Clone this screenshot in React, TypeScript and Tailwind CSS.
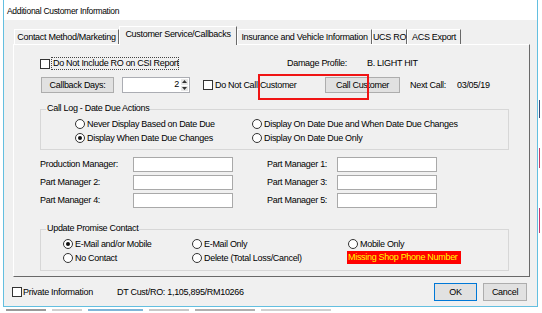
import React from "react";

/**
 * Small Win32-style controls
 */
function CheckBox() {
  return <span className="block w-[10px] h-[10px] shrink-0 border border-[#333] bg-white" />;
}

function Radio({ checked = false }: { checked?: boolean }) {
  return (
    <span className="flex w-[10px] h-[10px] shrink-0 items-center justify-center rounded-full border border-[#333] bg-white">
      {checked && <span className="block w-[4px] h-[4px] rounded-full bg-[#111]" />}
    </span>
  );
}

function RadioItem({ label, checked, className = "" }: { label: string; checked?: boolean; className?: string }) {
  return (
    <div className={`flex items-center gap-[2px] ${className}`}>
      <Radio checked={checked} />
      <span>{label}</span>
    </div>
  );
}

function WinButton({ label, className = "" }: { label: string; className?: string }) {
  return (
    <div className={`flex items-center justify-center border bg-[#e1e1e1] ${className}`}>{label}</div>
  );
}

function TextBox() {
  return <div className="w-[100px] h-[15px] border border-[#a9a9a9] bg-white" />;
}

function Group({ title, children }: { title: string; children: React.ReactNode }) {
  return (
    <div className="relative w-[469px] border border-[#d7d7d7]">
      {/* Legend sits over the top border */}
      <span className="absolute left-[5px] top-[-8px] bg-[#f0f0f0] px-[1px] leading-[13px]">{title}</span>
      {children}
    </div>
  );
}

const tabs = [
  { label: "Contact Method/Marketing", width: "w-[105px]" },
  { label: "Customer Service/Callbacks", width: "w-[118px]", active: true },
  { label: "Insurance and Vehicle Information", width: "w-[135px]" },
  { label: "UCS RO", width: "w-[35px]" },
  { label: "ACS Export", width: "w-[54px]" },
];

export default function App() {
  return (
    <div className="w-[542px] h-[313px] overflow-hidden whitespace-nowrap bg-white text-black text-[9px] leading-[13px] tracking-[-0.3px] font-['Liberation_Sans',Arial,sans-serif]">
      <div className="flex">
        <div className="w-[3px]" />
        {/* Window */}
        <div className="flex w-[535px] h-[307px] flex-col border-x border-b border-[#63bfe0]">
          {/* Title bar */}
          <div className="h-[20px] shrink-0 bg-white pl-[3px] pt-[5px] text-[8.5px]">
            Additional Customer Information
          </div>

          {/* Body */}
          <div className="flex flex-1 flex-col bg-[#f0f0f0]">
            {/* Tabs */}
            <div className="ml-[10px] flex h-[24px] shrink-0 items-end">
              {tabs.map((t) =>
                t.active ? (
                  <div
                    key={t.label}
                    className={`relative z-10 -mb-px flex h-[19px] items-center justify-center border-l border-t border-r border-l-white border-t-white border-r-[#696969] bg-[#f0f0f0] pb-[3px] ${t.width}`}
                  >
                    {t.label}
                  </div>
                ) : (
                  <div
                    key={t.label}
                    className={`flex h-[15px] items-center justify-center border-l border-t border-r border-l-white border-t-white border-r-[#696969] ${t.width}`}
                  >
                    {t.label}
                  </div>
                ),
              )}
            </div>

            {/* Tab panel */}
            <div className="relative ml-[9px] flex w-[517px] h-[233px] shrink-0 flex-col border border-l-white border-t-white border-r-[#696969] border-b-[#696969] pl-[26px]">
              {/* Row 1 */}
              <div className="mt-[12px] flex h-[13px] items-center">
                <CheckBox />
                <div className="ml-[1px] flex h-[13px] w-[128px] items-center border border-dotted border-[#444] pl-[1px]">
                  Do Not Include RO on CSI Report
                </div>
                <span className="ml-[108px] w-[80px]">Damage Profile:</span>
                <span>B. LIGHT HIT</span>
              </div>

              {/* Row 2 */}
              <div className="mt-[7px] flex h-[16px] items-center">
                <WinButton label="Callback Days:" className="ml-[1px] w-[73px] h-[16px] border-[#adadad]" />
                <div className="ml-[8px] flex w-[68px] h-[16px] border border-[#abadb3] bg-white">
                  <span className="flex-1 pr-[2px] text-right">2</span>
                  <div className="flex w-[8px] flex-col gap-px py-px pr-px">
                    <div className="flex flex-1 items-center justify-center bg-[#e6e6e6]">
                      <svg width="5" height="3" viewBox="0 0 5 3">
                        <path d="M0 3 L2.5 0 L5 3 Z" fill="#333" />
                      </svg>
                    </div>
                    <div className="flex flex-1 items-center justify-center bg-[#e6e6e6]">
                      <svg width="5" height="3" viewBox="0 0 5 3">
                        <path d="M0 0 L2.5 3 L5 0 Z" fill="#333" />
                      </svg>
                    </div>
                  </div>
                </div>
                <div className="ml-[13px]">
                  <CheckBox />
                </div>
                <span className="ml-[2px] w-[110px]">Do Not Call Customer</span>
                <WinButton label="Call Customer" className="w-[75px] h-[16px] border-[#adadad]" />
                <span className="ml-[10px] w-[47px]">Next Call:</span>
                <span>03/05/19</span>
              </div>

              {/* Highlight annotation */}
              <div className="pointer-events-none absolute left-[244px] top-[29px] w-[111px] h-[26px] border-2 border-[#f01414]" />

              {/* Call Log group */}
              <div className="mt-[16px]">
                <Group title="Call Log - Date Due Actions">
                  <div className="flex h-[39px] flex-col pl-[34px] pt-[7px]">
                    <div className="flex h-[14px]">
                      <RadioItem label="Never Display Based on Date Due" className="w-[177px]" />
                      <RadioItem label="Display On Date Due and When Date Due Changes" />
                    </div>
                    <div className="flex h-[14px]">
                      <RadioItem label="Display When Date Due Changes" checked className="w-[177px]" />
                      <RadioItem label="Display On Date Due Only" />
                    </div>
                  </div>
                </Group>
              </div>

              {/* Managers */}
              <div className="mt-[7px] flex flex-col gap-[3px]">
                {[
                  ["Production Manager:", "Part Manager 1:"],
                  ["Part Manager 2:", "Part Manager 3:"],
                  ["Part Manager 4:", "Part Manager 5:"],
                ].map(([a, b]) => (
                  <div key={a} className="flex h-[15px] items-center">
                    <span className="w-[93px]">{a}</span>
                    <TextBox />
                    <span className="ml-[34px] w-[70px]">{b}</span>
                    <TextBox />
                  </div>
                ))}
              </div>

              {/* Promise contact group */}
              <div className="mt-[21px]">
                <Group title="Update Promise Contact">
                  <div className="flex h-[40px] flex-col pl-[22px] pt-[7px]">
                    <div className="flex h-[14px]">
                      <RadioItem label="E-Mail and/or Mobile" checked className="w-[129px]" />
                      <RadioItem label="E-Mail Only" className="w-[156px]" />
                      <RadioItem label="Mobile Only" />
                    </div>
                    <div className="flex h-[14px]">
                      <RadioItem label="No Contact" className="w-[129px]" />
                      <RadioItem label="Delete (Total Loss/Cancel)" className="w-[155px]" />
                      <div className="flex h-[13px] w-[114px] items-center bg-[#ff0000] pl-px text-[#ffff00]">
                        Missing Shop Phone Number
                      </div>
                    </div>
                  </div>
                </Group>
              </div>
            </div>

            {/* Footer */}
            <div className="mt-[6px] flex h-[18px] items-center pl-[8px] pr-[10px]">
              <CheckBox />
              <span className="ml-[1px] w-[94px]">Private Information</span>
              <span>DT Cust/RO: 1,105,895/RM10266</span>
              <WinButton label="OK" className="ml-auto w-[43px] h-[18px] border-[#0078d7]" />
              <WinButton label="Cancel" className="ml-[6px] w-[44px] h-[18px] border-[#adadad]" />
            </div>
          </div>
        </div>
        {/* Background window edge */}
        <div className="flex w-[4px] flex-col pt-[100px]">
          <div className="ml-[1px] h-[18px] w-[1px] bg-[#3a4d7a]" />
          <div className="h-[30px]" />
          <div className="ml-[1px] h-[20px] w-[1px] bg-[#c0406a]" />
          <div className="h-[40px]" />
          <div className="ml-[1px] h-[25px] w-[1px] bg-[#c43a72]" />
        </div>
      </div>

      {/* Background window content below */}
      <div className="flex h-[6px] items-center gap-[6px] pl-[6px]">
        <div className="h-[2px] w-[40px] bg-[#9a9a9a]" />
        <div className="h-[2px] w-[30px] bg-[#cfcfcf]" />
        <div className="h-[2px] w-[55px] bg-[#7fb6d8]" />
        <div className="h-[2px] w-[40px] bg-[#c8c8c8]" />
        <div className="h-[2px] w-[60px] bg-[#b0b0b0]" />
        <div className="h-[2px] w-[70px] bg-[#d0d0d0]" />
      </div>
    </div>
  );
}
